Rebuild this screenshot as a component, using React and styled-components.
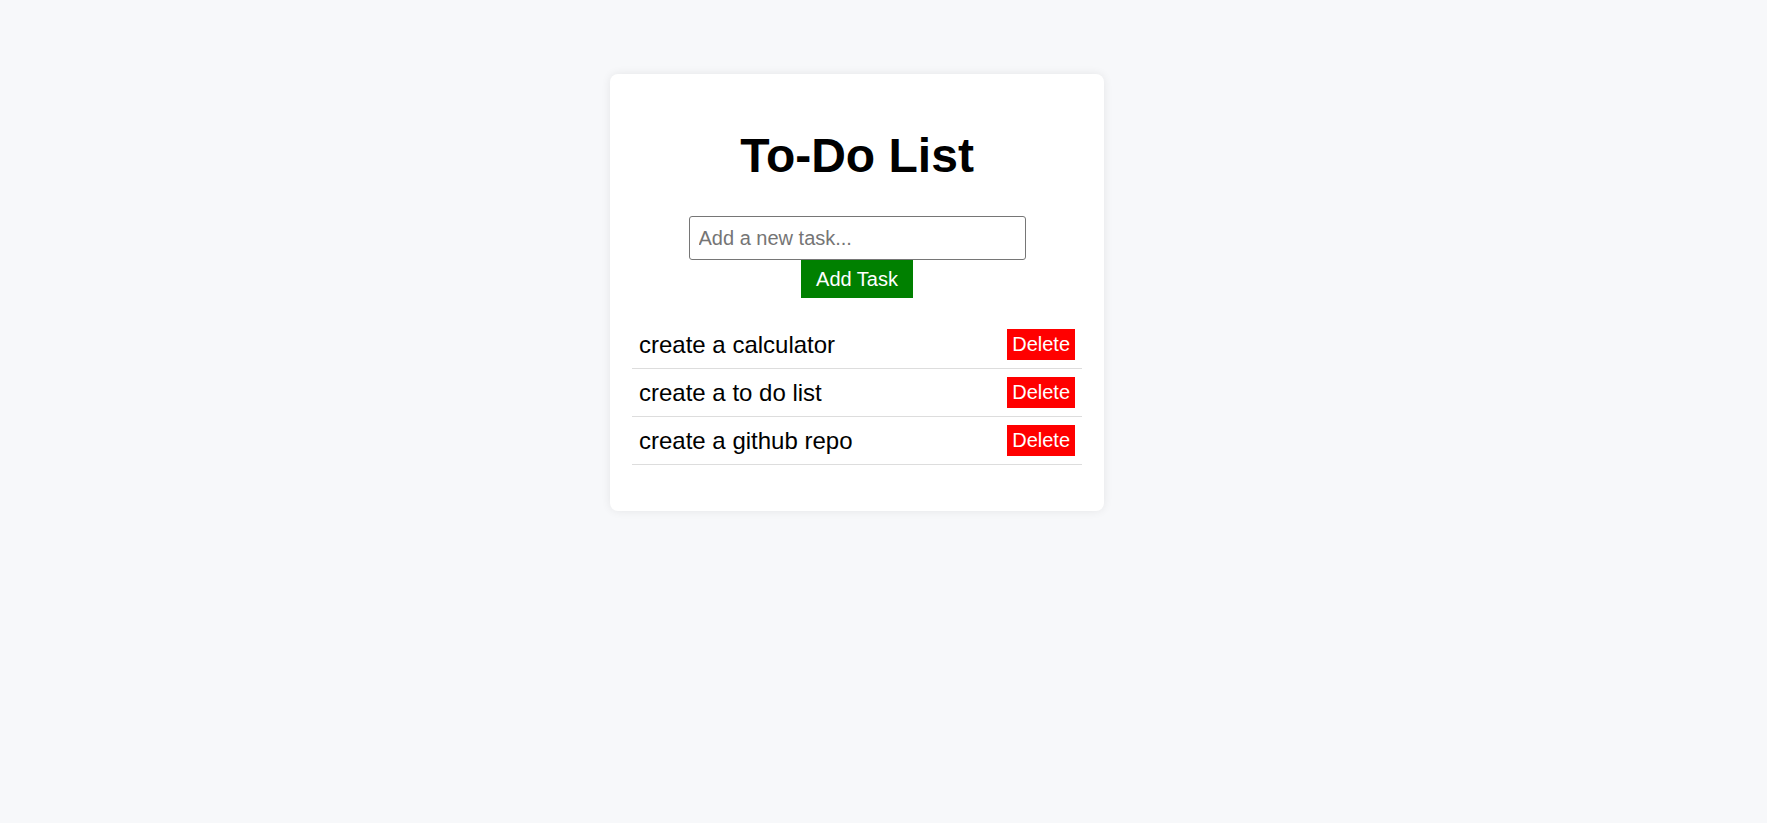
import React, { useState } from 'react';
import styled, { createGlobalStyle } from 'styled-components';

const GlobalStyle = createGlobalStyle`
  html, body {
    margin: 0;
    padding: 0;
    background: #f7f8fa;
    font-family: "Liberation Sans", Arial, sans-serif;
  }
`;

const Page = styled.div`
  min-height: 823px;
  padding: 74px 0 0 610px;
  box-sizing: border-box;
`;

const Card = styled.div`
  width: 494px;
  box-sizing: border-box;
  padding: 22px;
  background: #fff;
  border-radius: 8px;
  box-shadow: 0 0 10px rgba(0, 0, 0, 0.08);
`;

const Title = styled.h1`
  margin: 32px 0;
  font-size: 48px;
  line-height: 56px;
  font-weight: bold;
  text-align: center;
  color: #000;
`;

const Form = styled.div`
  display: flex;
  flex-direction: column;
  align-items: center;
`;

const Input = styled.input`
  width: 337px;
  height: 44px;
  box-sizing: border-box;
  padding: 0 9px;
  font-family: inherit;
  font-size: 20px;
  border: 1px solid #767676;
  border-radius: 3px;
  outline: none;
  &::placeholder {
    color: #757575;
  }
`;

const AddButton = styled.button`
  width: 112px;
  height: 38px;
  border: none;
  background: #008000;
  color: #fff;
  font-family: inherit;
  font-size: 20px;
  padding: 0;
  cursor: pointer;
`;

const List = styled.ul`
  list-style: none;
  margin: 23px 0 24px;
  padding: 0;
`;

const Item = styled.li`
  display: flex;
  align-items: center;
  justify-content: space-between;
  padding: 8px 7px;
  border-bottom: 1px solid #ddd;
  font-size: 24px;
  color: #000;
`;

const DeleteButton = styled.button`
  height: 31px;
  padding: 0 5px;
  border: none;
  background: #ff0000;
  color: #fff;
  font-family: inherit;
  font-size: 20px;
  cursor: pointer;
`;

export default function App() {
  const [tasks, setTasks] = useState([
    'create a calculator',
    'create a to do list',
    'create a github repo',
  ]);
  const [text, setText] = useState('');

  const add = () => {
    if (!text.trim()) return;
    setTasks([...tasks, text.trim()]);
    setText('');
  };

  return (
    <Page>
      <GlobalStyle />
      <Card>
        <Title>To-Do List</Title>
        <Form>
          <Input
            placeholder="Add a new task..."
            value={text}
            onChange={(e) => setText(e.target.value)}
          />
          <AddButton onClick={add}>Add Task</AddButton>
        </Form>
        <List>
          {tasks.map((t, i) => (
            <Item key={i}>
              <span>{t}</span>
              <DeleteButton onClick={() => setTasks(tasks.filter((_, j) => j !== i))}>
                Delete
              </DeleteButton>
            </Item>
          ))}
        </List>
      </Card>
    </Page>
  );
}
